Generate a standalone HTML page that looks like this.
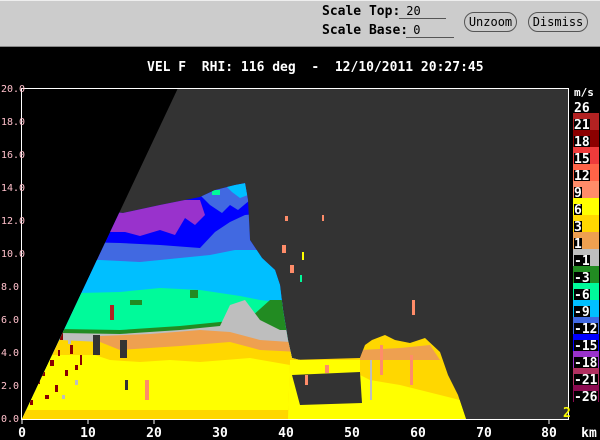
<!DOCTYPE html>
<html><head><meta charset="utf-8"><style>
html,body{margin:0;padding:0;background:#000;width:600px;height:440px;overflow:hidden;font-family:"Liberation Mono","DejaVu Sans Mono",monospace}
.bar{position:absolute;left:0;top:0;width:600px;height:47px;background:#cccccc;border-top:1px solid #eee;border-bottom:1px solid #888;box-sizing:border-box}
.lbl{position:absolute;font:bold 13px "DejaVu Sans Mono","Liberation Mono",monospace;color:#000}
.inp{position:absolute;font:12px "DejaVu Sans Mono",monospace;color:#000;border-bottom:1px solid #555}
.btn{position:absolute;border:1px solid #555;border-radius:10px;font:12px "DejaVu Sans Mono",monospace;text-align:center;line-height:18px;height:18px;color:#000;background:#cccccc}
.title{position:absolute;left:147px;top:60px;color:#fff;font:bold 13px "DejaVu Sans Mono","Liberation Mono",monospace;white-space:pre}
</style></head><body>
<div class="bar">
<div class="lbl" style="left:322px;top:3px">Scale Top:</div>
<div class="inp" style="left:399px;top:3px;width:47px;height:14px">&nbsp;20</div>
<div class="lbl" style="left:322px;top:22px">Scale Base:</div>
<div class="inp" style="left:406px;top:22px;width:48px;height:14px">&nbsp;0</div>
<div class="btn" style="left:464px;top:11px;width:51px">Unzoom</div>
<div class="btn" style="left:528px;top:11px;width:58px">Dismiss</div>
</div>
<div class="title">VEL F  RHI: 116 deg  -  12/10/2011 20:27:45</div>
<svg width="600" height="440" style="position:absolute;left:0;top:0" xmlns="http://www.w3.org/2000/svg">
<defs>
<clipPath id="cone"><polygon points="22,419 178,88 568,88 568,419"/></clipPath>
<clipPath id="echo"><polygon points="0,419 0,200 123,213 160,205 200,197 215,190 235,185 245,183 248,200 250,240 262,258 275,270 280,285 283,310 288,340 292,358 300,360 300,419"/></clipPath>
<clipPath id="echo2"><polygon points="288,419 290,360 360,358 365,345 372,340 385,335 395,340 410,343 425,338 440,352 448,375 458,395 466,419"/></clipPath>
</defs>
<rect x="22" y="88" width="546" height="331" fill="#333333"/>
<polygon points="22,88 178,88 22,419" fill="#000"/>
<g clip-path="url(#cone)">
<g clip-path="url(#echo)">
<rect x="0" y="180" width="300" height="240" fill="#0000ff"/>
<polygon points="0,200 200,200 205,215 195,225 185,218 175,235 160,230 140,236 125,232 0,232" fill="#9932cc"/>
<polygon points="200,195 215,190 235,185 245,183 250,200 238,210 230,205 222,213 210,205" fill="#4169e1"/>
<polygon points="226,186 240,184 246,183 248,195 240,198 232,192" fill="#00bfff"/>
<rect x="212" y="190" width="8" height="5" fill="#00fa9a"/>
<polygon points="0,240 120,243 160,245 200,248 215,232 230,222 245,215 300,210 300,420 0,420" fill="#4169e1"/>
<polygon points="0,258 100,260 140,262 180,258 210,255 235,250 260,250 300,250 300,420 0,420" fill="#00bfff"/>
<polygon points="0,292 80,293 120,292 160,288 200,290 240,296 260,300 300,305 300,420 0,420" fill="#00fa9a"/>
<polygon points="0,328 120,330 180,326 220,322 250,318 270,300 300,300 300,420 0,420" fill="#228b22"/>
<polygon points="0,332 120,334 180,330 220,326 230,305 245,300 260,320 280,330 300,330 300,420 0,420" fill="#bebebe"/>
<polygon points="100,336 150,334 200,330 230,332 260,340 290,342 300,345 300,420 100,420" fill="#eea050"/>
<polygon points="0,345 60,340 100,342 120,350 180,346 230,342 260,350 300,352 300,420 0,420" fill="#ffd700"/>
<polygon points="0,355 60,355 95,355 110,360 140,362 170,360 200,362 250,358 290,365 300,370 300,420 0,420" fill="#ffff00"/>
<rect x="0" y="410" width="300" height="10" fill="#ffd700"/>
<rect x="93" y="335" width="7" height="20" fill="#333"/>
<rect x="120" y="340" width="7" height="18" fill="#333"/>
<rect x="125" y="380" width="3" height="10" fill="#333"/>
<rect x="130" y="300" width="12" height="5" fill="#228b22"/>
<rect x="190" y="290" width="8" height="8" fill="#228b22"/>
<rect x="110" y="305" width="4" height="15" fill="#b22222"/>
<rect x="145" y="380" width="4" height="20" fill="#ff8c69"/>
</g>
<g clip-path="url(#echo2)">
<rect x="285" y="330" width="190" height="90" fill="#ffd700"/>
<polygon points="360,350 400,348 430,345 440,360 360,360" fill="#eea050"/>
<polygon points="290,360 360,360 360,375 370,380 400,385 420,390 440,395 460,400 470,420 285,420" fill="#ffff00"/>
<polygon points="292,375 360,372 362,403 300,405" fill="#333"/>
<rect x="380" y="345" width="3" height="30" fill="#ff8c69"/>
<rect x="410" y="355" width="3" height="30" fill="#ff8c69"/>
<rect x="370" y="360" width="2" height="40" fill="#bebebe"/>
</g>
<g fill="#8b0000">
<rect x="40" y="340" width="3" height="8"/><rect x="50" y="360" width="4" height="6"/><rect x="60" y="330" width="3" height="10"/><rect x="35" y="380" width="5" height="4"/><rect x="55" y="385" width="3" height="7"/><rect x="70" y="345" width="3" height="9"/><rect x="45" y="395" width="4" height="4"/><rect x="65" y="370" width="3" height="6"/><rect x="30" y="400" width="3" height="5"/><rect x="80" y="355" width="2" height="10"/><rect x="58" y="350" width="2" height="6"/><rect x="42" y="372" width="3" height="4"/><rect x="75" y="365" width="3" height="5"/>
</g>
<g fill="#bebebe"><rect x="48" y="350" width="3" height="5"/><rect x="62" y="395" width="3" height="4"/><rect x="75" y="380" width="3" height="5"/><rect x="68" y="340" width="3" height="4"/></g>
<g fill="#ff8c69"><rect x="285" y="216" width="3" height="5"/><rect x="322" y="215" width="2" height="6"/><rect x="282" y="245" width="4" height="8"/><rect x="290" y="265" width="4" height="8"/><rect x="412" y="300" width="3" height="15"/><rect x="305" y="375" width="3" height="10"/><rect x="325" y="365" width="4" height="8"/></g>
<rect x="302" y="252" width="2" height="8" fill="#ffff00"/>
<rect x="300" y="275" width="2" height="7" fill="#00fa9a"/>
</g>
<path d="M21.5 88 V419.5 H568.5 V88 M21 88.5 H568" stroke="#fff" stroke-width="1" fill="none"/>
<g stroke="#fff"><line x1="22" y1="419" x2="22" y2="424"/><line x1="88" y1="419" x2="88" y2="424"/><line x1="154" y1="419" x2="154" y2="424"/><line x1="549" y1="419" x2="549" y2="424"/></g>
<g fill="#ffc0cb" font-family="DejaVu Sans Mono,monospace" font-size="10">
<text x="1" y="92">20.0</text><text x="1" y="125">18.0</text><text x="1" y="158">16.0</text><text x="1" y="191">14.0</text><text x="1" y="224">12.0</text><text x="1" y="257">10.0</text><text x="1" y="290">8.0</text><text x="1" y="323">6.0</text><text x="1" y="356">4.0</text><text x="1" y="389">2.0</text><text x="1" y="422">0.0</text>
</g>
<g fill="#fff" font-family="DejaVu Sans Mono,monospace" font-size="13" font-weight="bold" text-anchor="middle">
<text x="22" y="437">0</text><text x="88" y="437">10</text><text x="154" y="437">20</text><text x="220" y="437">30</text><text x="286" y="437">40</text><text x="352" y="437">50</text><text x="418" y="437">60</text><text x="484" y="437">70</text><text x="549" y="437">80</text><text x="589" y="437">km</text>
</g>
<text x="563" y="417" fill="#ffff00" font-family="DejaVu Sans Mono,monospace" font-size="13" font-weight="bold">2</text>
<g>
<rect x="573" y="113" width="26" height="17" fill="#b22222"/><rect x="573" y="130" width="26" height="17" fill="#8b0000"/><rect x="573" y="147" width="26" height="17" fill="#ee3b3b"/><rect x="573" y="164" width="26" height="17" fill="#ff6347"/><rect x="573" y="181" width="26" height="17" fill="#ff8c69"/><rect x="573" y="198" width="26" height="17" fill="#ffff00"/><rect x="573" y="215" width="26" height="17" fill="#ffd700"/><rect x="573" y="232" width="26" height="17" fill="#eea050"/><rect x="573" y="249" width="26" height="17" fill="#bebebe"/><rect x="573" y="266" width="26" height="17" fill="#228b22"/><rect x="573" y="283" width="26" height="17" fill="#00fa9a"/><rect x="573" y="300" width="26" height="17" fill="#00bfff"/><rect x="573" y="317" width="26" height="17" fill="#4169e1"/><rect x="573" y="334" width="26" height="17" fill="#0000ff"/><rect x="573" y="351" width="26" height="17" fill="#9932cc"/><rect x="573" y="368" width="26" height="17" fill="#b03060"/><rect x="573" y="385" width="26" height="17" fill="#8b0a50"/>
</g>
<g font-family="DejaVu Sans Mono,monospace" font-size="13" font-weight="bold" fill="#fff">
<text x="574" y="96" font-size="11">m/s</text>
<g fill="#000"><rect x="574" y="102" width="16" height="11"/><rect x="574" y="119" width="16" height="11"/><rect x="574" y="136" width="16" height="11"/><rect x="574" y="153" width="16" height="11"/><rect x="574" y="170" width="16" height="11"/><rect x="574" y="187" width="8" height="11"/><rect x="574" y="204" width="8" height="11"/><rect x="574" y="221" width="8" height="11"/><rect x="574" y="238" width="8" height="11"/><rect x="574" y="255" width="16" height="11"/><rect x="574" y="272" width="16" height="11"/><rect x="574" y="289" width="16" height="11"/><rect x="574" y="306" width="16" height="11"/><rect x="574" y="323" width="24" height="11"/><rect x="574" y="340" width="24" height="11"/><rect x="574" y="357" width="24" height="11"/><rect x="574" y="374" width="24" height="11"/><rect x="574" y="391" width="24" height="11"/></g>
<text x="574" y="112">26</text><text x="574" y="129">21</text><text x="574" y="146">18</text><text x="574" y="163">15</text><text x="574" y="180">12</text><text x="574" y="197">9</text><text x="574" y="214">6</text><text x="574" y="231">3</text><text x="574" y="248">1</text><text x="574" y="265">-1</text><text x="574" y="282">-3</text><text x="574" y="299">-6</text><text x="574" y="316">-9</text><text x="574" y="333">-12</text><text x="574" y="350">-15</text><text x="574" y="367">-18</text><text x="574" y="384">-21</text><text x="574" y="401">-26</text>
</g>
</svg>
</body></html>
